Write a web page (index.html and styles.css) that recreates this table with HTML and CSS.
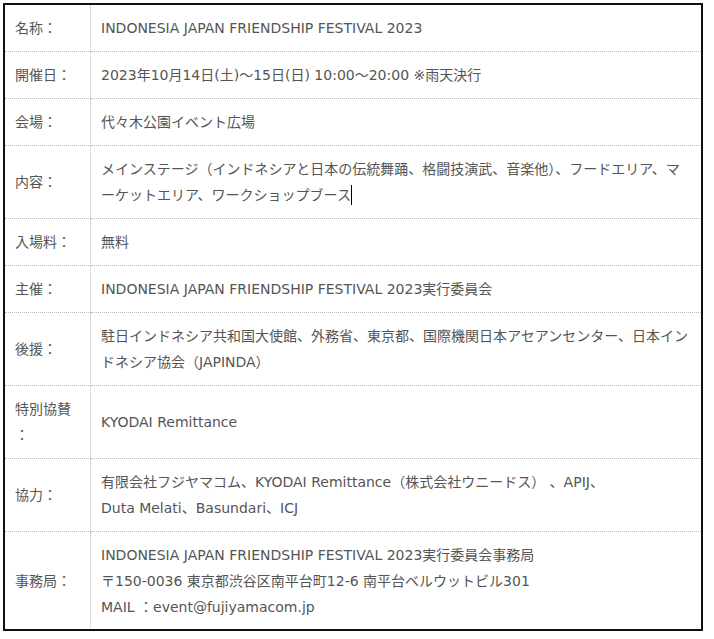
FILE: index.html
```html
<!DOCTYPE html>
<html lang="ja">
<head>
<meta charset="utf-8">
<link rel="stylesheet" href="styles.css">
</head>
<body>
<div class="frame">
<table class="info">
<tr><th>名称：</th><td>INDONESIA JAPAN FRIENDSHIP FESTIVAL 2023</td></tr>
<tr><th>開催日：</th><td>2023年10月14日(土)～15日(日) 10:00～20:00 ※雨天決行</td></tr>
<tr><th>会場：</th><td>代々木公園イベント広場</td></tr>
<tr><th>内容：</th><td>メインステージ（インドネシアと日本の伝統舞踊、格闘技演武、音楽他）、フードエリア、マーケットエリア、ワークショップブース<span class="caret"></span></td></tr>
<tr><th>入場料：</th><td>無料</td></tr>
<tr><th>主催：</th><td>INDONESIA JAPAN FRIENDSHIP FESTIVAL 2023実行委員会</td></tr>
<tr><th>後援：</th><td>駐日インドネシア共和国大使館、外務省、東京都、国際機関日本アセアンセンター、日本インドネシア協会（JAPINDA）</td></tr>
<tr><th>特別協賛<br>：</th><td>KYODAI Remittance</td></tr>
<tr><th>協力：</th><td>有限会社フジヤマコム、KYODAI Remittance（株式会社ウニードス） 、APIJ、<br>Duta Melati、Basundari、ICJ</td></tr>
<tr class="last"><th>事務局：</th><td>INDONESIA JAPAN FRIENDSHIP FESTIVAL 2023実行委員会事務局<br>〒150-0036 東京都渋谷区南平台町12-6 南平台ベルウットビル301<br>MAIL ：event@fujiyamacom.jp</td></tr>
</table>
</div>
</body>
</html>
```

FILE: styles.css
```css
html, body {
  margin: 0;
  padding: 0;
  background: #fff;
}
.frame {
  margin: 3px 0 0 3px;
  width: 700px;
  height: 628px;
  box-sizing: border-box;
  border: 2px solid #111;
  overflow: hidden;
}
.info {
  width: 100%;
  border-collapse: collapse;
  font-family: "DejaVu Sans", "Noto Sans CJK JP", sans-serif;
  font-size: 14px;
  line-height: 26px;
  color: #555;
}
.info th, .info td {
  padding: 10px 10px;
  text-align: left;
  font-weight: normal;
  vertical-align: middle;
  border-bottom: 1px dotted #bbb;
}
.info th {
  width: 65px;
  border-right: 1px dotted #bbb;
}
.info td {
  padding-right: 8px;
}
.info .last th, .info .last td {
  border-bottom: none;
}
.caret {
  display: inline-block;
  width: 1px;
  height: 20px;
  background: #000;
  vertical-align: -5px;
}
```
